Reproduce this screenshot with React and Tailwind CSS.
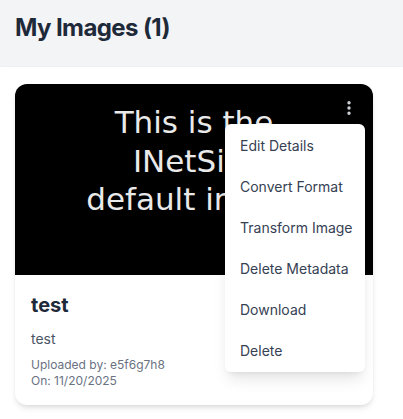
import React from "react";
import { EllipsisVertical } from "lucide-react";

const menuItems = [
  "Edit Details",
  "Convert Format",
  "Transform Image",
  "Delete Metadata",
  "Download",
  "Delete",
];

// fake preview of the INetSim default picture
function Preview() {
  return (
    <div
      className="h-[191px] bg-black text-center text-[31px] leading-[38.5px] text-[#e9e9e9] pt-[19px]"
      style={{ fontFamily: '"DejaVu Sans", sans-serif' }}
    >
      <div>This is the</div>
      <div>INetSim</div>
      <div>default image</div>
    </div>
  );
}

export default function App() {
  return (
    <div
      className="min-h-screen bg-gray-100 text-gray-800"
      style={{ fontFamily: 'Inter, "Noto Sans", sans-serif' }}
    >
      {/* header */}
      <div className="h-[67px] px-[15px] pt-3">
        <h1 className="text-2xl font-bold tracking-tight text-gray-800">My Images (1)</h1>
      </div>

      {/* panel */}
      <div className="bg-white shadow-sm px-[15px] pt-[17px] pb-4 min-h-[352px]">
        <div className="relative w-[358px] rounded-xl bg-white shadow-md">
          <div className="overflow-hidden rounded-t-xl">
            <Preview />
          </div>

          <button className="absolute right-[15px] top-[15px] text-gray-300">
            <EllipsisVertical size={18} strokeWidth={2.5} />
          </button>

          {/* dropdown */}
          <div className="absolute left-[210px] top-[40px] w-[140px] rounded-md bg-white shadow-lg py-px">
            {menuItems.map((item) => (
              <div
                key={item}
                className="h-[41px] flex items-center pl-[15px] whitespace-nowrap text-sm text-gray-700"
              >
                {item}
              </div>
            ))}
          </div>

          {/* body */}
          <div className="px-4 pt-4 pb-4">
            <h2 className="text-xl leading-7 font-bold text-gray-800">test</h2>
            <p className="mt-2.5 text-sm text-gray-600">test</p>
            <div className="mt-2 text-xs text-gray-500">
              <div>Uploaded by: e5f6g7h8</div>
              <div>On: 11/20/2025</div>
            </div>
          </div>
        </div>
      </div>
    </div>
  );
}
